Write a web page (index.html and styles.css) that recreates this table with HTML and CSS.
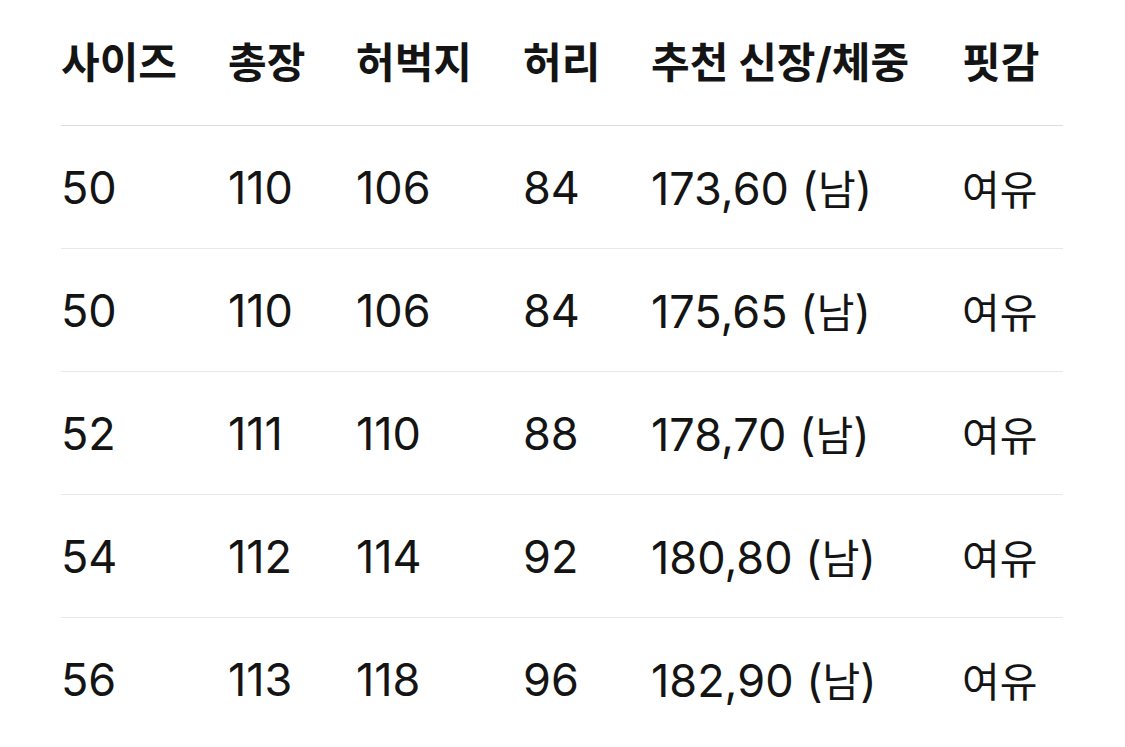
FILE: index.html
```html
<!DOCTYPE html>
<html lang="ko">
<head>
<meta charset="utf-8">
<link rel="stylesheet" href="styles.css">
</head>
<body>
<div class="table">
  <div class="row head">
    <div>사이즈</div><div>총장</div><div>허벅지</div><div>허리</div><div>추천 신장/체중</div><div>핏감</div>
  </div>
  <div class="row">
    <div>50</div><div>110</div><div>106</div><div>84</div><div>173,60 (<span class="ko">남</span>)</div><div class="ko">여유</div>
  </div>
  <div class="row">
    <div>50</div><div>110</div><div>106</div><div>84</div><div>175,65 (<span class="ko">남</span>)</div><div class="ko">여유</div>
  </div>
  <div class="row">
    <div>52</div><div>111</div><div>110</div><div>88</div><div>178,70 (<span class="ko">남</span>)</div><div class="ko">여유</div>
  </div>
  <div class="row">
    <div>54</div><div>112</div><div>114</div><div>92</div><div>180,80 (<span class="ko">남</span>)</div><div class="ko">여유</div>
  </div>
  <div class="row last">
    <div>56</div><div>113</div><div>118</div><div>96</div><div>182,90 (<span class="ko">남</span>)</div><div class="ko">여유</div>
  </div>
</div>
</body>
</html>
```
FILE: styles.css
```css
html, body {
  margin: 0;
  padding: 0;
  background: #ffffff;
}
body {
  font-family: "Inter", "Noto Sans CJK KR", sans-serif;
  color: #141414;
  overflow: hidden;
}
.table {
  margin-left: 61px;
  width: 1002px;
}
.row {
  display: grid;
  grid-template-columns: 167px 128px 167px 128px 311px 1fr;
  align-items: center;
  height: 122px;
  border-bottom: 1px solid #e8e8e8;
  font-size: 45px;
  font-weight: 400;
}
.ko {
  font-size: 41px;
}
.row.head {
  box-sizing: border-box;
  height: 126px;
  padding-bottom: 7px;
  font-size: 42px;
  font-weight: 700;
  border-bottom: 1px solid #dedede;
}
.row.last {
  border-bottom: none;
}
```
